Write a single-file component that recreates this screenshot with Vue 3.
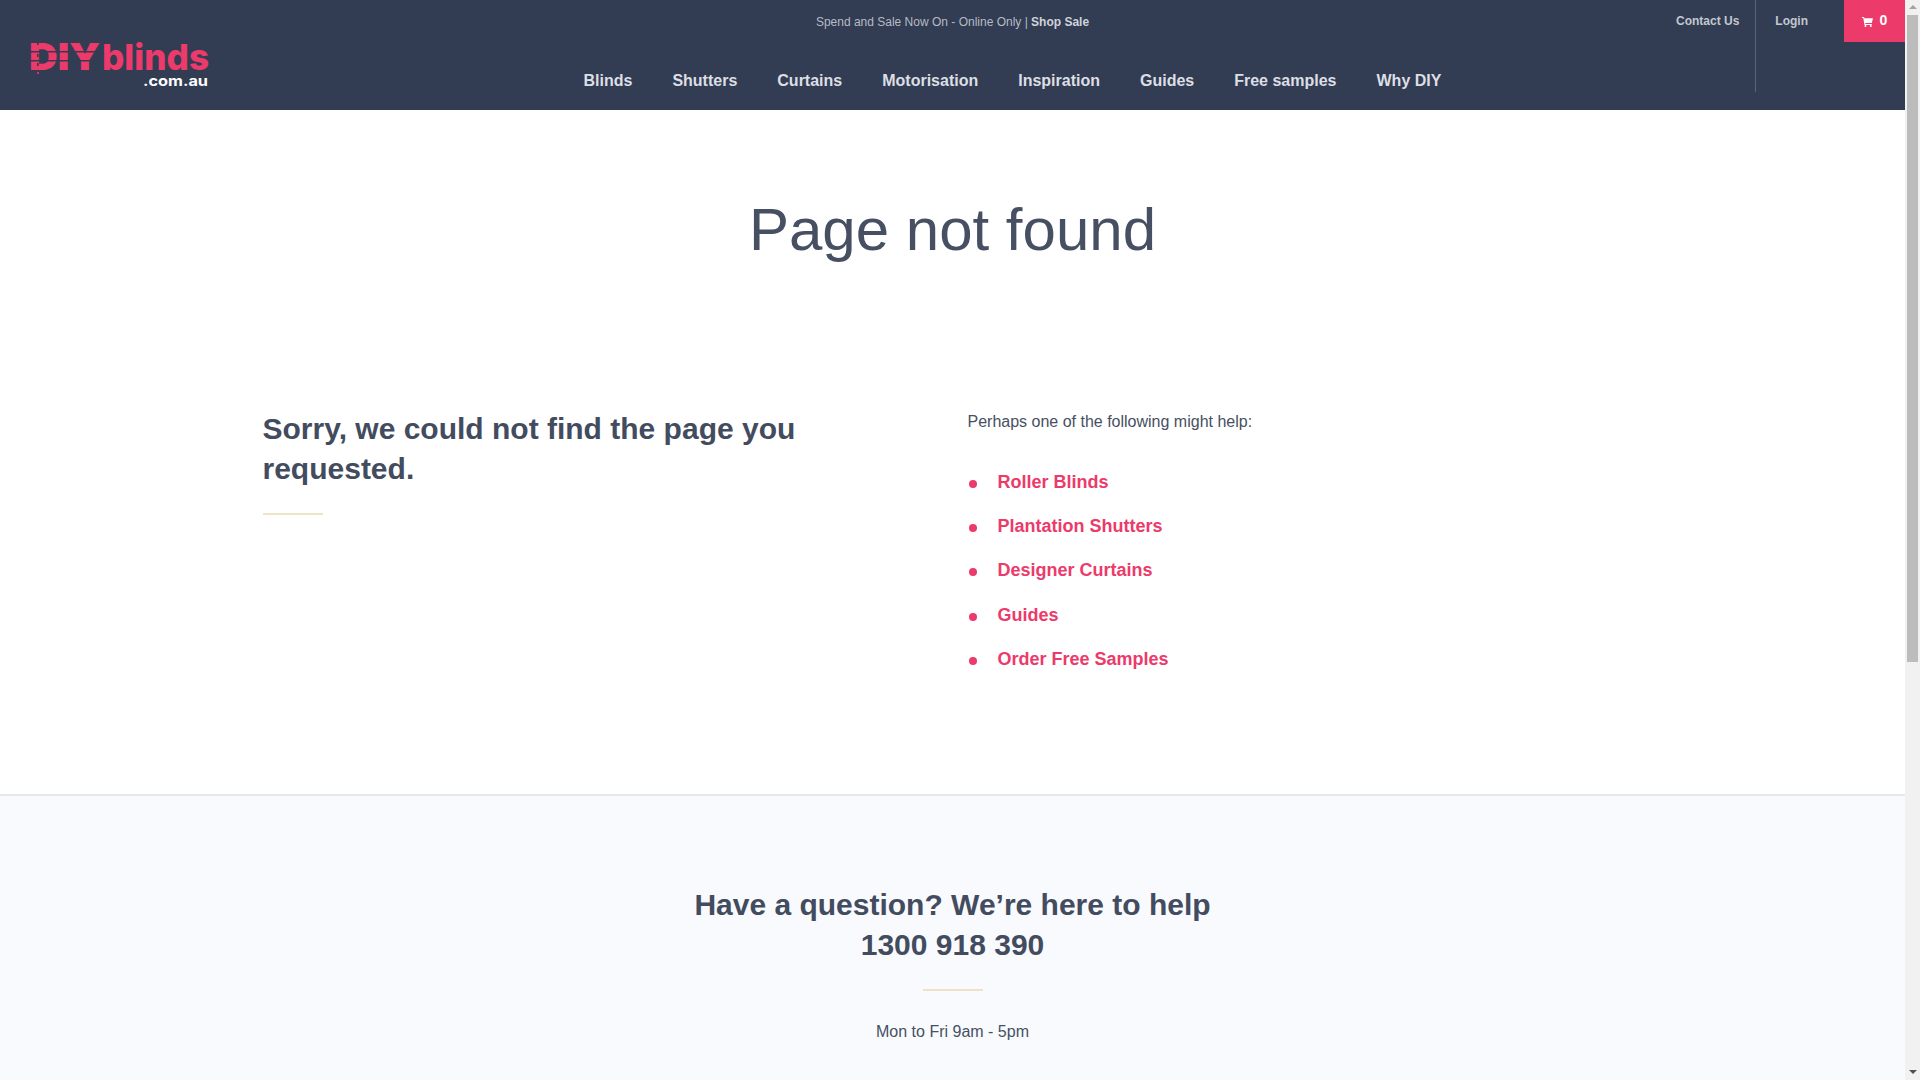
<script setup>
const nav = ['Blinds', 'Shutters', 'Curtains', 'Motorisation', 'Inspiration', 'Guides', 'Free samples', 'Why DIY']
const links = ['Roller Blinds', 'Plantation Shutters', 'Designer Curtains', 'Guides', 'Order Free Samples']
</script>

<template>
  <div class="window">
    <div class="page">
      <header class="header">
        <div class="logo">
          <svg width="190" height="70" viewBox="30 25 190 70">
            <text x="29" y="70" class="logo-diy" textLength="71" lengthAdjust="spacingAndGlyphs">DIY</text>
            <g fill="#323c52">
              <rect x="30" y="51" width="70" height="1.5" />
              <rect x="30" y="60" width="70" height="1.5" />
              <rect x="37" y="42" width="1.6" height="3" />
              <rect x="37" y="54" width="1.6" height="3" />
              <rect x="37" y="63" width="1.6" height="3" />
            </g>
            <circle cx="38" cy="73" r="1.1" fill="#ec3a6b" />
            <text x="102" y="70" class="logo-word" textLength="107" lengthAdjust="spacingAndGlyphs">blinds</text>
            <text x="143" y="86" class="logo-tld" textLength="65" lengthAdjust="spacingAndGlyphs">.com.au</text>
          </svg>
        </div>
        <div class="center">
          <p class="promo">Spend and Sale Now On - Online Only | <b>Shop Sale</b></p>
          <nav class="nav"><a v-for="n in nav" :key="n">{{ n }}</a></nav>
        </div>
        <div class="util">
          <a class="contact">Contact Us</a>
          <a class="login">Login</a>
          <a class="cart">
            <svg width="11" height="10" viewBox="0 0 11 10"><path fill="#fff" d="M0 0h2l.4 1.2H11L9.8 6H3.2l.2 1h6.4v1H2.5L1.3 1H0z" /><circle cx="3.5" cy="9" r="1" fill="#fff" /><circle cx="8.8" cy="9" r="1" fill="#fff" /></svg>
            <span>0</span>
          </a>
        </div>
      </header>
      <main>
        <h1 class="title">Page not found</h1>
        <section class="columns">
          <div class="left">
            <h2 class="h2">Sorry, we could not find the page you requested.</h2>
            <div class="rule"></div>
          </div>
          <div class="right">
            <p class="perhaps">Perhaps one of the following might help:</p>
            <ul class="list">
              <li v-for="l in links" :key="l"><a>{{ l }}</a></li>
            </ul>
          </div>
        </section>
        <section class="help">
          <h2 class="h2">Have a question? We’re here to help<br />1300 918 390</h2>
          <div class="rule"></div>
          <p class="hours">Mon to Fri 9am - 5pm</p>
        </section>
      </main>
    </div>
    <div class="scrollbar">
      <span class="arrow up"></span>
      <div class="track"><div class="thumb"></div></div>
      <span class="arrow down"></span>
    </div>
  </div>
</template>

<style>
html, body { margin: 0; height: 100%; overflow: hidden; }
</style>

<style scoped>
* { box-sizing: border-box; }
.window { display: flex; width: 1920px; height: 1080px; overflow: hidden; font-family: "Liberation Sans", Arial, sans-serif; color: #475063; background: #fff; }
.page { flex: 1; min-width: 0; overflow: hidden; }
.header { display: flex; height: 110px; background: #323c52; position: relative; }
.logo { width: 460px; height: 110px; padding: 25px 0 0 30px; flex: none; }
.logo svg { display: block; }
.logo-diy { font: 900 37px "Inter", "Liberation Sans", sans-serif; fill: #ec3a6b; }
.logo-word { font: 800 36px "Inter", "Liberation Sans", sans-serif; fill: #ec3a6b; }
.logo-tld { font: 700 14px "Inter", "Liberation Sans", sans-serif; fill: #fff; }
.center { flex: 1; display: flex; flex-direction: column; align-items: flex-start; padding-left: 123.5px; min-width: 0; }
.promo { margin: 15px 0 0; font-size: 12px; line-height: 14px; color: #b6bbc6; position: absolute; left: 0; width: 1905px; text-align: center; }
.promo b { color: #cfd3da; }
.nav { display: flex; gap: 40px; margin-top: 70px; font-size: 16px; font-weight: 700; line-height: 22px; color: #dcdfe5; }
.util { display: flex; align-items: flex-start; flex: none; font-size: 12px; font-weight: 700; color: #c3c8d1; }
.contact { padding-top: 14px; padding-right: 16px; height: 92px; border-right: 1px solid #5b6474; margin-left: 1px; }
.login { padding: 14px 36px 0 20px; margin-left: -1px; }
.cart { display: flex; align-items: center; justify-content: center; gap: 7px; width: 61px; height: 42px; background: #ec3a6b; color: #fff; font-size: 14px; padding-bottom: 2px; }
.cart svg { margin-top: 3px; }
.title { margin: 0; padding-top: 84px; text-align: center; font-size: 60px; line-height: 72px; font-weight: 400; color: #475063; }
.columns { display: flex; padding: 143px 0 0 262.5px; height: 528px; }
.left { width: 705px; padding-right: 130px; }
.h2 { margin: 0; font-size: 30px; line-height: 40px; font-weight: 700; color: #434c5e; }
.rule { width: 60px; height: 2px; background: #eee2c8; margin-top: 24px; }
.right { flex: 1; }
.perhaps { margin: 0; font-size: 16px; line-height: 26px; color: #475063; }
.list { margin: 25px 0 0; padding: 0; list-style: none; }
.list li { position: relative; padding-left: 30px; font-size: 18px; line-height: 44.2px; font-weight: 700; color: #ec3a6b; }
.list li::before { content: ""; position: absolute; left: 1px; top: 20px; width: 8px; height: 8px; border-radius: 50%; background: #ec3a6b; }
.help { border-top: 2px solid #e6e8ec; background: #f8fafe; padding-top: 89px; height: 400px; text-align: center; }
.help .rule { margin: 24px auto 0; }
.hours { margin: 28px 0 0; font-size: 16px; line-height: 26px; }
.scrollbar { width: 15px; flex: none; background: #f1f1f1; display: flex; flex-direction: column; align-items: center; }
.arrow { height: 15px; flex: none; position: relative; width: 100%; }
.arrow::after { content: ""; position: absolute; left: 4px; border-left: 4px solid transparent; border-right: 4px solid transparent; }
.arrow.up::after { top: 5px; border-bottom: 4px solid #a3a3a3; }
.arrow.down::after { top: 5px; border-top: 4px solid #505050; }
.track { flex: 1; width: 100%; }
.thumb { width: 11px; margin: 0 auto; height: 647px; background: #bcbcbc; }
</style>
